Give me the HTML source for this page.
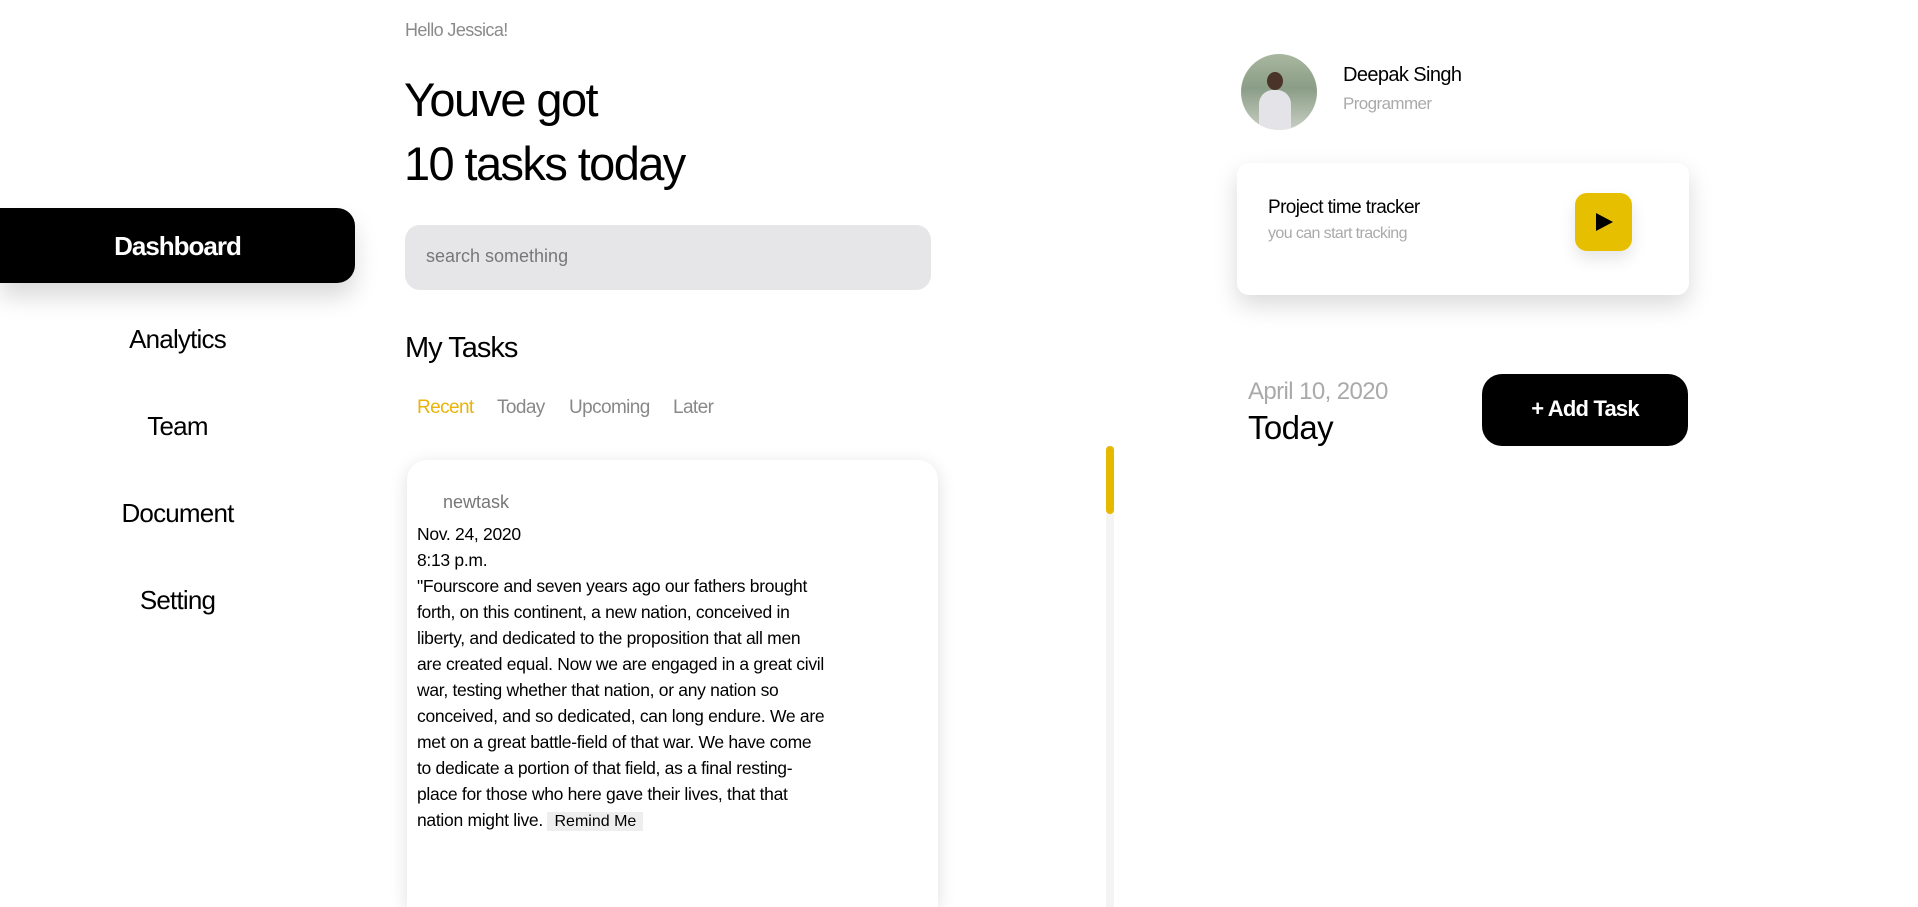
<!DOCTYPE html>
<html><head><meta charset="utf-8"><style>
*{margin:0;padding:0;box-sizing:border-box}
html,body{width:1918px;height:907px;overflow:hidden}
body{background:#fff;font-family:"Liberation Sans",sans-serif;position:relative;color:#000}
.a{position:absolute;white-space:nowrap}
.nav{position:absolute;left:0;width:355px;text-align:center;font-size:26px;letter-spacing:-0.8px}
.cond{letter-spacing:-0.6px}
</style></head><body>
<div class="a cond" style="left:405px;top:20px;font-size:18px;color:#8a8a8a">Hello Jessica!</div>
<div class="a" style="left:404px;top:68px;font-size:47px;line-height:64px;letter-spacing:-1.6px">Youve got<br>10 tasks today</div>

<div style="position:absolute;left:0;top:208px;width:355px;height:75px;background:#000;border-radius:0 18px 18px 0;box-shadow:0 14px 24px rgba(0,0,0,.15)"></div>
<div class="nav" style="top:231px;color:#fff;font-weight:bold;letter-spacing:-1px">Dashboard</div>
<div class="nav" style="top:324px">Analytics</div>
<div class="nav" style="top:411px">Team</div>
<div class="nav" style="top:498px">Document</div>
<div class="nav" style="top:585px">Setting</div>

<div style="position:absolute;left:405px;top:225px;width:526px;height:65px;background:#e6e6e8;border-radius:15px"></div>
<div class="a" style="left:426px;top:246px;font-size:18px;color:#777">search something</div>

<div class="a" style="left:405px;top:332px;font-size:29px;letter-spacing:-1px">My Tasks</div>
<div class="a cond" style="left:417px;top:397px;font-size:19px;color:#eab308">Recent</div>
<div class="a cond" style="left:497px;top:397px;font-size:19px;color:#888">Today</div>
<div class="a cond" style="left:569px;top:397px;font-size:19px;color:#888">Upcoming</div>
<div class="a cond" style="left:673px;top:397px;font-size:19px;color:#888">Later</div>

<div style="position:absolute;left:407px;top:460px;width:531px;height:447px;background:#fff;border-radius:20px 20px 0 0;box-shadow:0 4px 18px rgba(0,0,0,.13)"></div>
<div class="a" style="left:443px;top:492px;font-size:18px;color:#777">newtask</div>
<div class="a" style="left:417px;top:521px;font-size:17.5px;line-height:26px;letter-spacing:-0.3px">Nov. 24, 2020<br>8:13 p.m.<br>"Fourscore and seven years ago our fathers brought<br>forth, on this continent, a new nation, conceived in<br>liberty, and dedicated to the proposition that all men<br>are created equal. Now we are engaged in a great civil<br>war, testing whether that nation, or any nation so<br>conceived, and so dedicated, can long endure. We are<br>met on a great battle-field of that war. We have come<br>to dedicate a portion of that field, as a final resting-<br>place for those who here gave their lives, that that<br>nation might live. <span style="background:#eee;font-size:16px;padding:1px 7px;letter-spacing:0">Remind Me</span></div>

<div style="position:absolute;left:1106px;top:446px;width:8px;height:461px;background:#f4f4f4"></div>
<div style="position:absolute;left:1106px;top:446px;width:8px;height:68px;background:#e6b800;border-radius:4px"></div>

<div style="position:absolute;left:1241px;top:54px;width:76px;height:76px;border-radius:50%;overflow:hidden;background:linear-gradient(180deg,#a9b7a0 0%,#8a9d86 45%,#c9cfc4 100%)">
<div style="position:absolute;left:26px;top:18px;width:16px;height:18px;border-radius:50%;background:#4a3328"></div>
<div style="position:absolute;left:18px;top:36px;width:32px;height:44px;border-radius:14px 14px 0 0;background:#e4e4e8"></div>
</div>
<div class="a cond" style="left:1343px;top:64px;font-size:20px">Deepak Singh</div>
<div class="a cond" style="left:1343px;top:94px;font-size:17px;color:#aaa">Programmer</div>

<div style="position:absolute;left:1237px;top:163px;width:452px;height:132px;background:#fff;border-radius:12px;box-shadow:0 10px 24px rgba(0,0,0,.15)"></div>
<div class="a cond" style="left:1268px;top:197px;font-size:19px">Project time tracker</div>
<div class="a cond" style="left:1268px;top:225px;font-size:16px;color:#aaa">you can start tracking</div>
<div style="position:absolute;left:1575px;top:193px;width:57px;height:58px;background:#e6bf00;border-radius:12px;box-shadow:0 8px 16px rgba(0,0,0,.1)"></div>
<svg style="position:absolute;left:1594px;top:212px" width="20" height="20"><path d="M2 1 L19 10 L2 19 Z" fill="#000"/></svg>

<div class="a cond" style="left:1248px;top:378px;font-size:24px;color:#aaa">April 10, 2020</div>
<div class="a cond" style="left:1248px;top:409px;font-size:33px">Today</div>
<div style="position:absolute;left:1482px;top:374px;width:206px;height:72px;background:#000;border-radius:20px"></div>
<div class="a" style="left:1482px;top:396px;width:206px;text-align:center;font-size:22px;color:#fff;font-weight:bold;letter-spacing:-0.8px">+ Add Task</div>
</body></html>
